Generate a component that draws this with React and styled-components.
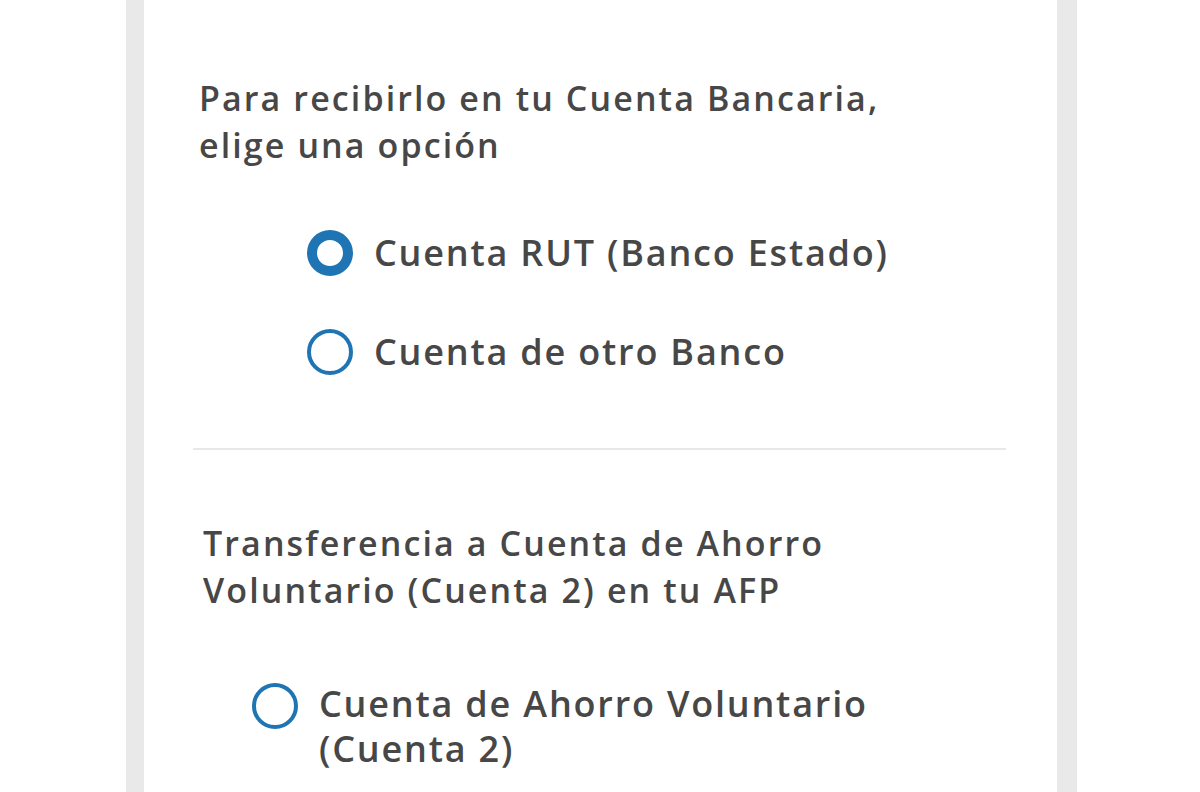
import React, { useState } from 'react';
import styled, { createGlobalStyle } from 'styled-components';

const GlobalStyle = createGlobalStyle`
  body {
    margin: 0;
    background: #ffffff;
    font-family: "Open Sans", "Noto Sans", sans-serif;
  }
`;

const bankOptions = [
  { id: 'rut', label: 'Cuenta RUT (Banco Estado)' },
  { id: 'otro', label: 'Cuenta de otro Banco' },
];

const App = () => {
  const [ selected, setSelected ] = useState('rut');

  return (
    <>
      <GlobalStyle />
      <Frame>
        <Card>
          <Heading>
            Para recibirlo en tu Cuenta Bancaria,<br />elige una opción
          </Heading>
          <OptionList $indent={114} $top={59}>
            {bankOptions.map(opt => (
              <Option key={opt.id} onClick={() => setSelected(opt.id)}>
                <Radio $checked={selected === opt.id} />
                <Label>{opt.label}</Label>
              </Option>
            ))}
          </OptionList>

          <Divider />

          <Heading $shift={10}>
            Transferencia a Cuenta de Ahorro<br />Voluntario (Cuenta 2) en tu AFP
          </Heading>
          <OptionList $indent={59} $top={67}>
            <Option onClick={() => setSelected('cuenta2')}>
              <Radio $checked={selected === 'cuenta2'} />
              <Label $narrow>
                Cuenta de Ahorro Voluntario<br />(Cuenta 2)
              </Label>
            </Option>
          </OptionList>
        </Card>
      </Frame>
    </>
  );
};

const Frame = styled.div`
  box-sizing: border-box;
  margin-left: 126px;
  width: 951px;
  min-height: 100vh;
  border-left: 18px solid #e9e9e9;
  border-right: 20px solid #e9e9e9;
  background: #ffffff;
`;

const Card = styled.div`
  padding: 75px 51px 40px 49px;
`;

const Heading = styled.h2`
  margin: ${p => (p.$shift ? '70px' : '0')} 0 0 ${p => (p.$shift || 6)}px;
  font-size: 34px;
  line-height: 47px;
  letter-spacing: 2.1px;
  font-weight: 600;
  color: #474747;
`;

const OptionList = styled.div`
  display: flex;
  flex-direction: column;
  gap: 49px;
  margin-top: ${p => p.$top}px;
  padding-left: ${p => p.$indent}px;
`;

const Option = styled.label`
  display: flex;
  align-items: flex-start;
  gap: 21px;
  cursor: pointer;
`;

const Radio = styled.span`
  box-sizing: border-box;
  flex: none;
  width: 46px;
  height: 46px;
  margin-top: 2px;
  border-radius: 50%;
  border: ${p => (p.$checked ? '10px' : '4px')} solid #1f74b4;
  background: #ffffff;
`;

const Label = styled.span`
  font-size: 36px;
  line-height: ${p => (p.$narrow ? '45px' : '50px')};
  letter-spacing: 1.8px;
  font-weight: 600;
  color: #474747;
`;

const Divider = styled.hr`
  margin: 71px 0 0;
  border: none;
  height: 2px;
  background: #e8e8e8;
`;

export default App;
